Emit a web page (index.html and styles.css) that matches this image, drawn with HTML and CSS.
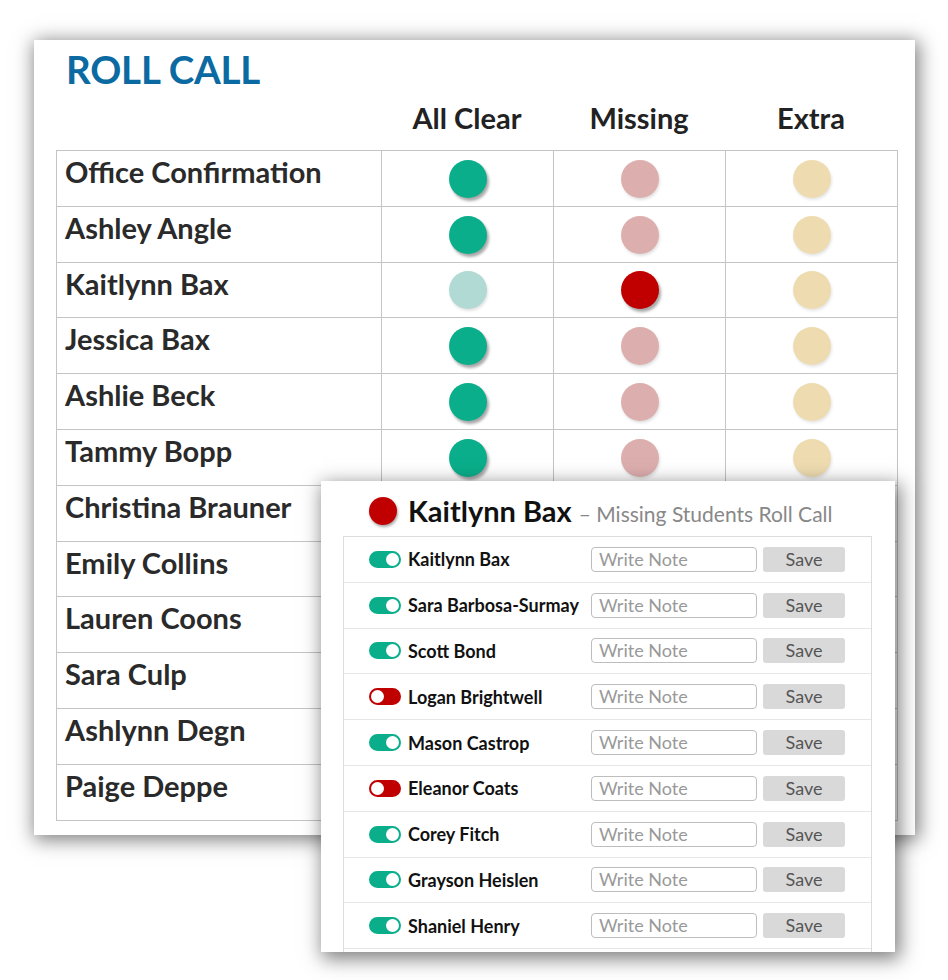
FILE: index.html
```html
<!DOCTYPE html>
<html>
<head>
<meta charset="utf-8">
<link rel="stylesheet" href="styles.css">
</head>
<body>
<div class="card">
  <h1 class="title">ROLL CALL</h1>
  <div class="head">
    <div></div>
    <div class="colh">All Clear</div>
    <div class="colh">Missing</div>
    <div class="colh">Extra</div>
  </div>
  <div class="table">
    <div class="row"><div class="name">Office Confirmation</div><div class="cell"><span class="dot g"></span></div><div class="cell"><span class="dot pk"></span></div><div class="cell"><span class="dot y"></span></div></div>
    <div class="row"><div class="name">Ashley Angle</div><div class="cell"><span class="dot g"></span></div><div class="cell"><span class="dot pk"></span></div><div class="cell"><span class="dot y"></span></div></div>
    <div class="row"><div class="name">Kaitlynn Bax</div><div class="cell"><span class="dot pg"></span></div><div class="cell"><span class="dot r"></span></div><div class="cell"><span class="dot y"></span></div></div>
    <div class="row"><div class="name">Jessica Bax</div><div class="cell"><span class="dot g"></span></div><div class="cell"><span class="dot pk"></span></div><div class="cell"><span class="dot y"></span></div></div>
    <div class="row"><div class="name">Ashlie Beck</div><div class="cell"><span class="dot g"></span></div><div class="cell"><span class="dot pk"></span></div><div class="cell"><span class="dot y"></span></div></div>
    <div class="row"><div class="name">Tammy Bopp</div><div class="cell"><span class="dot g"></span></div><div class="cell"><span class="dot pk"></span></div><div class="cell"><span class="dot y"></span></div></div>
    <div class="row"><div class="name">Christina Brauner</div><div class="cell"></div><div class="cell"></div><div class="cell"></div></div>
    <div class="row"><div class="name">Emily Collins</div><div class="cell"></div><div class="cell"></div><div class="cell"></div></div>
    <div class="row"><div class="name">Lauren Coons</div><div class="cell"></div><div class="cell"></div><div class="cell"></div></div>
    <div class="row"><div class="name">Sara Culp</div><div class="cell"></div><div class="cell"></div><div class="cell"></div></div>
    <div class="row"><div class="name">Ashlynn Degn</div><div class="cell"></div><div class="cell"></div><div class="cell"></div></div>
    <div class="row"><div class="name">Paige Deppe</div><div class="cell"></div><div class="cell"></div><div class="cell"></div></div>
  </div>
</div>

<div class="popup">
  <div class="ptitle">
    <span class="pdot"></span>
    <span class="pname">Kaitlynn Bax</span>
    <span class="psub">– Missing Students Roll Call</span>
  </div>
  <div class="list">
    <div class="item"><span class="tog on"><span class="knob"></span></span><span class="iname">Kaitlynn Bax</span><span class="note">Write Note</span><span class="save">Save</span></div>
    <div class="item"><span class="tog on"><span class="knob"></span></span><span class="iname">Sara Barbosa-Surmay</span><span class="note">Write Note</span><span class="save">Save</span></div>
    <div class="item"><span class="tog on"><span class="knob"></span></span><span class="iname">Scott Bond</span><span class="note">Write Note</span><span class="save">Save</span></div>
    <div class="item"><span class="tog off"><span class="knob"></span></span><span class="iname">Logan Brightwell</span><span class="note">Write Note</span><span class="save">Save</span></div>
    <div class="item"><span class="tog on"><span class="knob"></span></span><span class="iname">Mason Castrop</span><span class="note">Write Note</span><span class="save">Save</span></div>
    <div class="item"><span class="tog off"><span class="knob"></span></span><span class="iname">Eleanor Coats</span><span class="note">Write Note</span><span class="save">Save</span></div>
    <div class="item"><span class="tog on"><span class="knob"></span></span><span class="iname">Corey Fitch</span><span class="note">Write Note</span><span class="save">Save</span></div>
    <div class="item"><span class="tog on"><span class="knob"></span></span><span class="iname">Grayson Heislen</span><span class="note">Write Note</span><span class="save">Save</span></div>
    <div class="item"><span class="tog on"><span class="knob"></span></span><span class="iname">Shaniel Henry</span><span class="note">Write Note</span><span class="save">Save</span></div>
  </div>
</div>
</body>
</html>
```

FILE: styles.css
```css
html, body {
  margin: 0;
  padding: 0;
  background: #ffffff;
}
body {
  font-family: Lato, "Open Sans", sans-serif;
  position: relative;
  width: 948px;
  height: 980px;
  overflow: hidden;
}
.card {
  margin: 40px 0 0 34px;
  width: 881px;
  height: 795px;
  box-sizing: border-box;
  background: #fff;
  box-shadow: 2px 3px 18px 2px rgba(0, 0, 0, 0.5);
  padding: 0 18px 0 22px;
}
.title {
  margin: 0;
  padding: 5px 0 0 10px;
  height: 52px;
  font-size: 38.5px;
  font-weight: 700;
  line-height: 48px;
  color: #0b6aa2;
  letter-spacing: -0.2px;
  box-sizing: border-box;
}
.head {
  display: grid;
  grid-template-columns: 325px 172px 172px 172px;
  height: 58px;
  align-items: center;
}
.colh {
  text-align: center;
  font-size: 29px;
  font-weight: 700;
  color: #222;
  padding-bottom: 8px;
}
.table {
  border-top: 1px solid #c4c4c4;
  border-left: 1px solid #c4c4c4;
  width: 841px;
}
.row {
  display: grid;
  grid-template-columns: 325px 172px 172px 172px;
  height: 55.8px;
  box-sizing: border-box;
  border-bottom: 1px solid #c4c4c4;
}
.name {
  border-right: 1px solid #c4c4c4;
  font-size: 29px;
  font-weight: 700;
  color: #2a2a2a;
  padding: 4px 0 0 8px;
  line-height: 34px;
}
.cell {
  border-right: 1px solid #c4c4c4;
  display: flex;
  align-items: center;
  justify-content: center;
}
.dot {
  width: 38px;
  height: 38px;
  border-radius: 50%;
  display: block;
  margin-top: 1px;
}
.g { background: #0aae8a; box-shadow: 2px 3px 3px rgba(0,0,0,0.35); }
.r { background: #c00000; box-shadow: 2px 3px 3px rgba(0,0,0,0.35); }
.pk { background: #ddaeae; box-shadow: 1px 2px 3px rgba(0,0,0,0.12); }
.y { background: #eedcb0; box-shadow: 1px 2px 3px rgba(0,0,0,0.1); }
.pg { background: #b0dad3; box-shadow: 1px 2px 3px rgba(0,0,0,0.12); }

.popup {
  position: absolute;
  left: 321px;
  top: 481px;
  width: 574px;
  height: 471px;
  box-sizing: border-box;
  background: #fff;
  box-shadow: 3px 5px 18px 2px rgba(0, 0, 0, 0.5);
  padding: 0 23px 0 22px;
  overflow: hidden;
}
.ptitle {
  height: 55px;
  display: flex;
  align-items: center;
  padding-left: 26px;
  box-sizing: border-box;
  padding-top: 4px;
}
.pdot {
  width: 28px;
  height: 28px;
  border-radius: 50%;
  background: #c00000;
  box-shadow: 1px 2px 3px rgba(0,0,0,0.35);
  margin-right: 11px;
  flex: none;
}
.pname {
  font-size: 29px;
  font-weight: 700;
  color: #111;
  margin-right: 7px;
}
.psub {
  font-size: 21px;
  color: #888;
  padding-top: 6px;
}
.list {
  border: 1px solid #dcdcdc;
  border-bottom: none;
  height: 420px;
}
.item {
  display: flex;
  align-items: center;
  height: 45.8px;
  box-sizing: border-box;
  border-bottom: 1px solid #e6e6e6;
  padding-left: 25px;
}
.tog {
  width: 32px;
  height: 17px;
  box-sizing: border-box;
  border-radius: 9px;
  border: 2px solid;
  display: flex;
  align-items: center;
  flex: none;
}
.tog.on { background: #0aae8a; border-color: #0aae8a; justify-content: flex-end; }
.tog.off { background: #c00000; border-color: #c00000; justify-content: flex-start; }
.knob {
  width: 13px;
  height: 13px;
  border-radius: 50%;
  background: #fff;
}
.iname {
  margin-left: 7px;
  width: 183px;
  flex: none;
  font-size: 18px;
  font-weight: 700;
  color: #111;
  white-space: nowrap;
}
.note {
  width: 166px;
  height: 25px;
  box-sizing: border-box;
  border: 1px solid #bdbdbd;
  border-radius: 4px;
  font-size: 18px;
  color: #999;
  padding-left: 7px;
  line-height: 23px;
  flex: none;
}
.save {
  margin-left: 6px;
  width: 82px;
  height: 25px;
  background: #d9d9d9;
  border-radius: 3px;
  text-align: center;
  font-size: 18px;
  color: #555;
  line-height: 25px;
  flex: none;
}
```
